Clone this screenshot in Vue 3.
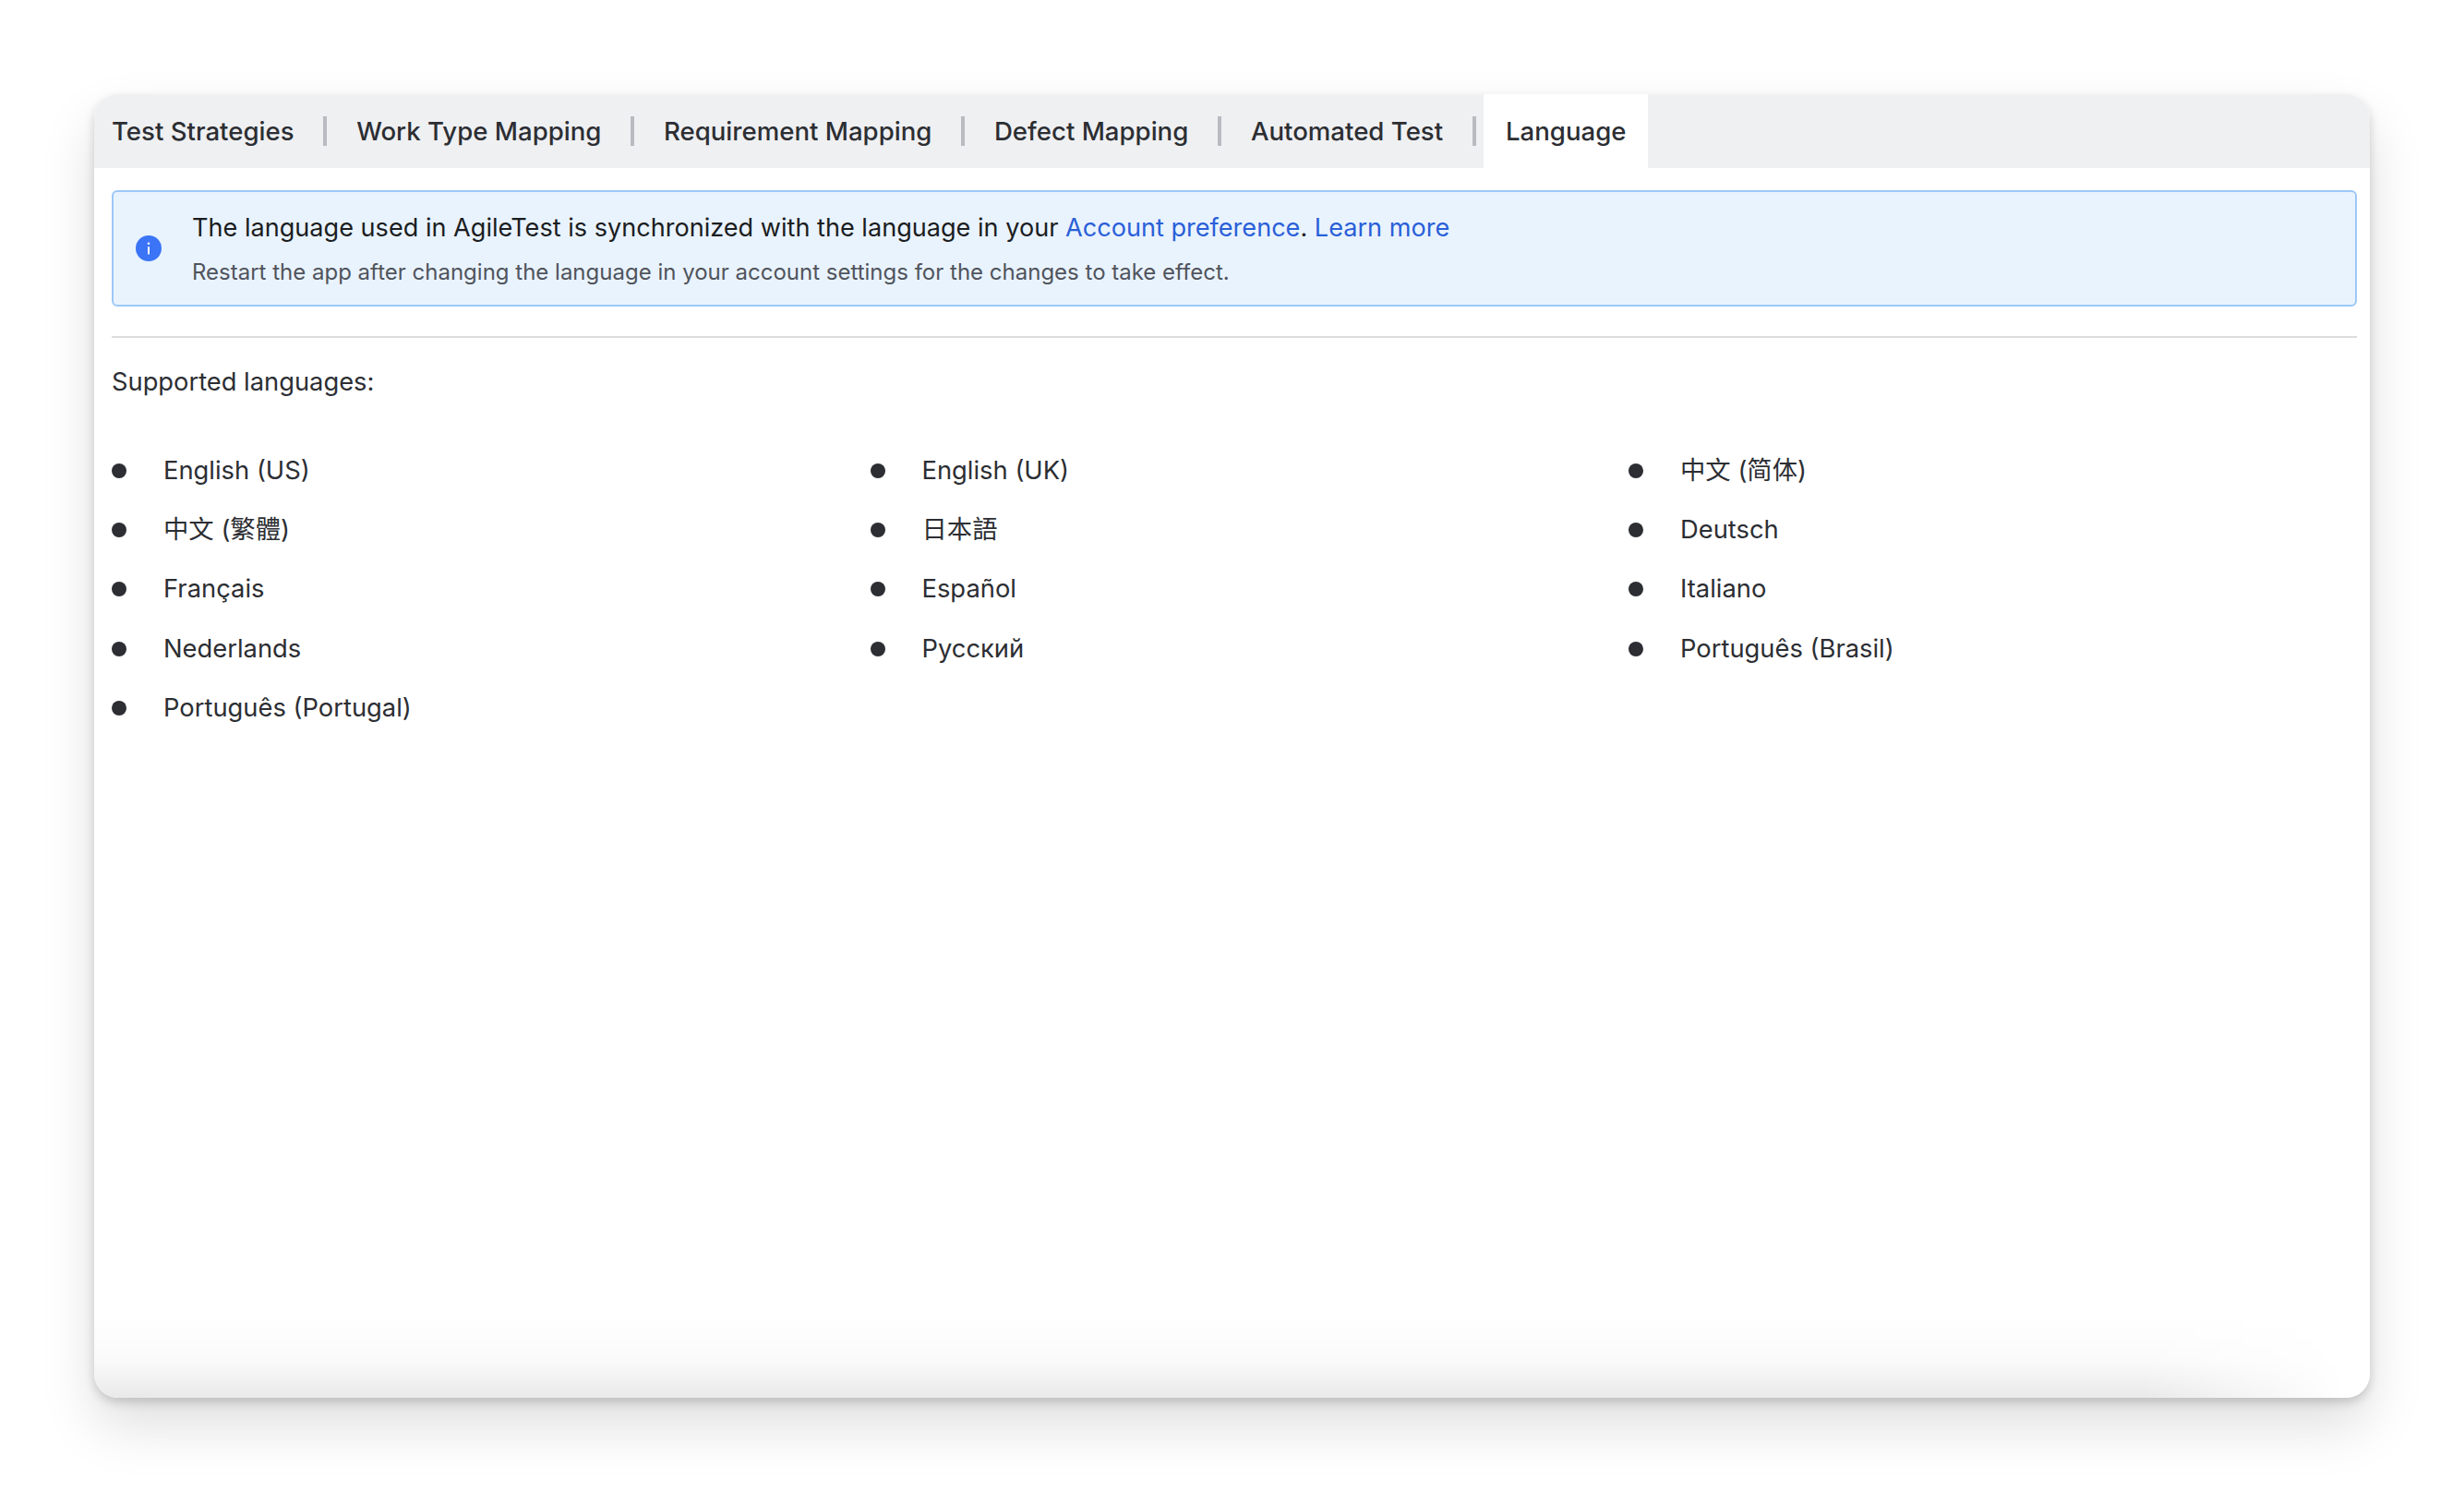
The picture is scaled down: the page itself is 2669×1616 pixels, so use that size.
<script setup>
const tabs = ['Test Strategies', 'Work Type Mapping', 'Requirement Mapping', 'Defect Mapping', 'Automated Test']
const languages = [
  'English (US)', 'English (UK)', '中文 (简体)',
  '中文 (繁體)', '日本語', 'Deutsch',
  'Français', 'Español', 'Italiano',
  'Nederlands', 'Русский', 'Português (Brasil)',
  'Português (Portugal)'
]
</script>

<template>
  <div class="page">
    <main class="card">
      <nav class="tabs">
        <template v-for="tab in tabs" :key="tab">
          <span class="tab">{{ tab }}</span>
          <span class="sep"></span>
        </template>
        <span class="tab active">Language</span>
      </nav>
      <section class="content">
        <div class="alert">
          <svg class="info" viewBox="0 0 28 28" aria-hidden="true">
            <circle cx="14" cy="14" r="14" fill="#3b74f6" />
            <rect x="13" y="12" width="2" height="8.5" rx="0.6" fill="#fff" />
            <circle cx="14" cy="8.8" r="1.3" fill="#fff" />
          </svg>
          <div class="alert-text">
            <p class="line-main">The language used in AgileTest is synchronized with the language in your <a>Account preference</a>. <a>Learn more</a></p>
            <p class="line-sub">Restart the app after changing the language in your account settings for the changes to take effect.</p>
          </div>
        </div>
        <hr class="rule" />
        <p class="heading">Supported languages:</p>
        <ul class="langs">
          <li v-for="lang in languages" :key="lang"><span>{{ lang }}</span></li>
        </ul>
      </section>
    </main>
  </div>
</template>

<style>
html, body { margin: 0; background: #fff; }
</style>

<style scoped>
.page {
  position: relative;
  box-sizing: border-box;
  width: 2669px;
  height: 1616px;
  padding: 102px;
  background: #fff;
  overflow: hidden;
  font-family: Inter, "Noto Sans CJK SC", sans-serif;
  color: #2c2e33;
}
.card {
  position: relative;
  box-sizing: border-box;
  height: 1412px;
  background: #fff;
  border-radius: 26px;
  overflow: hidden;
}
.page::before {
  content: "";
  position: absolute;
  left: 102px;
  top: 102px;
  width: 2465px;
  height: 1412px;
  border-radius: 26px;
  box-shadow: 0 5px 11px rgba(0, 0, 0, 0.17), 0 30px 60px rgba(0, 0, 0, 0.13);
}
.card::after {
  content: "";
  position: absolute;
  left: 0;
  right: 0;
  bottom: 0;
  height: 90px;
  pointer-events: none;
  background: linear-gradient(to top, rgba(0, 0, 0, 0.085), rgba(0, 0, 0, 0.02) 45%, transparent);
  -webkit-mask-image: linear-gradient(to right, #000 90%, transparent 99%);
  mask-image: linear-gradient(to right, #000 90%, transparent 99%);
}
.tabs {
  display: flex;
  align-items: center;
  height: 80px;
  padding-left: 19px;
  background: #eff0f2;
  font-size: 27.6px;
  font-weight: 500;
  white-space: nowrap;
}
.tab {
  line-height: 80px;
}
.sep {
  flex: none;
  width: 4px;
  height: 32px;
  margin: 0 31.8px;
  background: #b9bbc0;
}
.sep:nth-last-child(2) {
  margin-right: 8px;
}
.tab.active {
  padding: 0 24px;
  background: #fff;
}
.content {
  padding: 24px 14px 0 19px;
}
.alert {
  box-sizing: border-box;
  display: flex;
  align-items: center;
  height: 126px;
  padding-left: 24px;
  background: #e9f3fe;
  border: 2.5px solid #9cc8f8;
  border-radius: 6px;
}
.info {
  flex: none;
  width: 28px;
  height: 28px;
  margin-right: 33px;
}
.alert-text p {
  margin: 0;
}
.line-main {
  font-size: 27.1px;
  line-height: 40px;
  color: #1b1d21;
  margin-bottom: 11px !important;
}
.line-main a {
  color: #2a5fd8;
}
.line-sub {
  font-size: 24px;
  line-height: 34px;
  color: #50545c;
}
.rule {
  height: 2px;
  margin: 32px 0 0;
  border: 0;
  background: #dcdcdc;
}
.heading {
  margin: 31px 0 0;
  font-size: 27.3px;
  line-height: 34px;
}
.langs {
  display: grid;
  grid-template-columns: repeat(3, 821.5px);
  margin: 46.5px 0 0;
  padding: 0;
  list-style: none;
  font-size: 27.35px;
}
.langs li {
  display: flex;
  align-items: center;
  height: 64.4px;
  line-height: 34px;
  white-space: nowrap;
}
.langs li span {
  display: block;
  height: 34px;
}
.langs li::before {
  content: "";
  flex: none;
  width: 16px;
  height: 16px;
  margin-right: 40px;
  border-radius: 50%;
  background: #2c2e33;
}
</style>
